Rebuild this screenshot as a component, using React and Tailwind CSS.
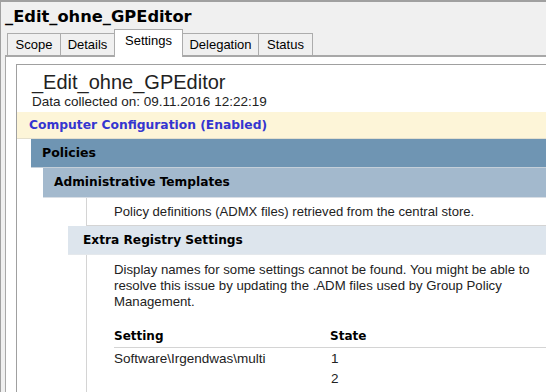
import React from 'react';

const tabs = [
  { label: 'Scope', w: 'w-[54px]' },
  { label: 'Details', w: 'w-[55px]' },
  { label: 'Settings', w: 'w-[69px]', active: true },
  { label: 'Delegation', w: 'w-[77px]' },
  { label: 'Status', w: 'w-[55px]' },
];

const bold = { fontFamily: '"DejaVu Sans", Verdana, sans-serif' };

function Tab({ label, w, active }) {
  if (active) {
    return (
      <div className={`${w} relative z-10 -ml-px -mb-[2px] h-[28px] pt-[3px] bg-white border border-b-0 border-[#acacac] text-center text-[13px] leading-[16px] text-black`}>
        {label}
      </div>
    );
  }
  return (
    <div className={`${w} h-[22px] pt-[3px] bg-[#f0f0f0] border border-b-0 border-[#acacac] -ml-px first:ml-0 text-center text-[13px] leading-[16px] text-black`}>
      {label}
    </div>
  );
}

export default function App() {
  return (
    <div
      className="w-[546px] h-[392px] overflow-hidden bg-[#f0f0f0] border-t-2 border-l border-[#a0a0a0] flex flex-col"
      style={{ fontFamily: '"Liberation Sans", Arial, sans-serif' }}
    >
      <div className="h-[31px] shrink-0 pl-[4px] pt-[5px] text-[16.3px] leading-[20px] font-bold text-black" style={bold}>
        _Edit_ohne_GPEditor
      </div>

      <div className="flex items-end pl-[6px] h-[22px] shrink-0">
        {tabs.map((t) => (
          <Tab key={t.label} {...t} />
        ))}
      </div>

      <div className="flex-1 ml-[4px] bg-white border-t-2 border-l border-[#a8a8a8] pl-[10px] pt-[7px]">
        <div className="h-full border-t border-l border-[#a0a0a0] pt-[5px]">
          <div className="pl-[15px] text-[20px] leading-[24px] text-[#222]">_Edit_ohne_GPEditor</div>
          <div className="pl-[15px] text-[13.5px] leading-[16px] text-[#222]">
            Data collected on: 09.11.2016 12:22:19
          </div>

          <div
            className="mt-[2px] h-[27px] flex items-center pl-[12px] bg-[#fdf5d8] border-b border-[#e4dfcd] text-[12.3px] font-bold text-[#3535d0]"
            style={bold}
          >
            Computer Configuration (Enabled)
          </div>

          <div
            className="ml-[14px] h-[29px] flex items-center pl-[11px] bg-[#6f95b3] border-b border-[#c4cfd9] text-[12.5px] font-bold text-black"
            style={bold}
          >
            Policies
          </div>

          <div
            className="ml-[26px] h-[30px] flex items-center pl-[11px] bg-[#a3b9cd] border-b border-[#d8dee5] text-[12.2px] font-bold text-black"
            style={bold}
          >
            Administrative Templates
          </div>

          <div className="ml-[69px] h-[28px] flex items-center pl-[27px] border-l border-b border-[#d4d4d4] text-[13.1px] text-[#222]">
            Policy definitions (ADMX files) retrieved from the central store.
          </div>

          <div
            className="ml-[51px] h-[29px] flex items-center pl-[15px] bg-[#dde5ed] border-b border-[#e4e8ec] text-[12.2px] font-bold text-black"
            style={bold}
          >
            Extra Registry Settings
          </div>

          <div className="ml-[69px] border-l border-[#d4d4d4] pl-[27px] pt-[7px] pb-[20px] text-[13.5px] text-[#222]">
            <div className="text-[13.2px] leading-[16px] whitespace-nowrap">
              Display names for some settings cannot be found. You might be able to
              <br />
              resolve this issue by updating the .ADM files used by Group Policy
              <br />
              Management.
            </div>

            <div
              className="mt-[17px] flex border-b border-[#d4d4d4] h-[21px] text-[12px] leading-[16px] pt-px font-bold text-black"
              style={bold}
            >
              <div className="w-[216px]">Setting</div>
              <div>State</div>
            </div>
            <div className="flex h-[21px] leading-[21px]">
              <div className="w-[217px]">Software\Irgendwas\multi</div>
              <div>1</div>
            </div>
            <div className="flex h-[20px] leading-[20px]">
              <div className="w-[217px]"></div>
              <div>2</div>
            </div>
          </div>
        </div>
      </div>
    </div>
  );
}
